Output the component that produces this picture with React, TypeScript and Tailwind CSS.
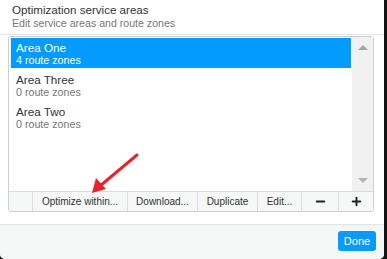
import { Minus, Plus } from 'lucide-react'

const areas = [
  { name: 'Area One', zones: 4 },
  { name: 'Area Three', zones: 0 },
  { name: 'Area Two', zones: 0 },
]

export default function App() {
  return (
    <div className="w-[387px] h-[259px] bg-[#121212] font-['Liberation_Sans',Arial,sans-serif]">
      <div className="relative w-[384px] h-[259px] bg-white rounded-b-[5px] overflow-hidden flex flex-col">
        <header className="h-[35px] px-3 pt-[2px] border-b border-[#e6e6e6]">
          <h1 className="text-[11.6px] leading-[15px] text-[#333]">Optimization service areas</h1>
          <p className="text-[10.6px] leading-[13px] text-[#777]">Edit service areas and route zones</p>
        </header>

        <div className="pl-2 pt-[1px]">
          <div className="w-[366px] h-[176px] border border-[#cfcfcf] rounded-[3px] flex flex-col">
            <div className="flex-1 flex min-h-0">
              <ul className="flex-1 pl-[2px] pt-[1px] pr-[1px]">
                {areas.map((a, i) => (
                  <li
                    key={a.name}
                    className={
                      'h-[30px] mb-[2px] pl-[5px] pt-[4px] ' +
                      (i === 0 ? 'bg-[#039bfe] text-white' : 'text-[#333]')
                    }
                  >
                    <div className="text-[11.7px] leading-[12px]">{a.name}</div>
                    <div className={'text-[10.7px] leading-[12px] ' + (i === 0 ? 'text-white' : 'text-[#777]')}>
                      {a.zones} route zones
                    </div>
                  </li>
                ))}
              </ul>
              <div className="w-[21px] bg-[#f1f1f1] flex flex-col items-center justify-between pt-[8px] pb-[8px]">
                <span className="w-0 h-0 border-x-[5px] border-x-transparent border-b-[5px] border-b-[#a6a6a6]" />
                <span className="w-0 h-0 border-x-[5px] border-x-transparent border-t-[5px] border-t-[#b3b3b3]" />
              </div>
            </div>
            <div className="h-[20px] flex border-t border-[#dcdcdc] bg-[#f6f7f7] text-[10px] text-[#333] rounded-b-[3px]">
              <div className="w-[24px] border-r border-[#dcdcdc]" />
              <div className="w-[95px] border-r border-[#dcdcdc] flex items-center justify-center">Optimize within...</div>
              <div className="w-[70px] border-r border-[#dcdcdc] flex items-center justify-center">Download...</div>
              <div className="w-[60px] border-r border-[#dcdcdc] flex items-center justify-center">Duplicate</div>
              <div className="w-[44px] border-r border-[#dcdcdc] flex items-center justify-center">Edit...</div>
              <div className="w-[37px] border-r border-[#dcdcdc] flex items-center justify-center">
                <Minus size={13} strokeWidth={3.5} className="text-[#222]" />
              </div>
              <div className="flex-1 flex items-center justify-center">
                <Plus size={13} strokeWidth={3.5} className="text-[#222]" />
              </div>
            </div>
          </div>
        </div>

        <div className="mt-[12px] flex-1 border-t border-[#e3e3e3] bg-[#f5f6f6] flex justify-end items-start pt-[6px] pr-2">
          <button className="w-[38px] h-[20px] rounded-[3px] bg-[#089bfd] text-white text-[11px] leading-[20px]">
            Done
          </button>
        </div>

        <svg className="absolute left-0 top-0 pointer-events-none" width="384" height="259">
          <line x1="137" y1="155" x2="100" y2="186" stroke="#e8232b" strokeWidth="3" strokeLinecap="round" />
          <polygon points="92,193 96,178 106,189" fill="#e8232b" />
        </svg>
      </div>
    </div>
  )
}
